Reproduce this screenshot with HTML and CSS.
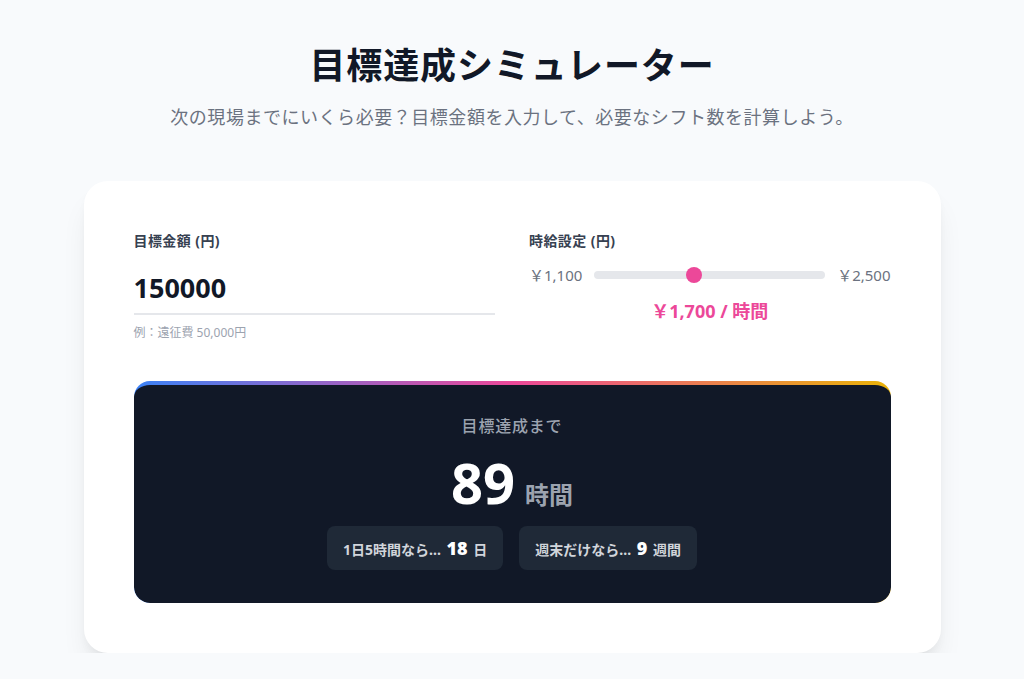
FILE: index.html
```html
<!DOCTYPE html>
<html lang="ja">
<head>
<meta charset="utf-8">
<link rel="stylesheet" href="styles.css">
</head>
<body>
<main class="page">
  <header class="head">
    <h1 class="title">目標達成シミュレーター</h1>
    <p class="subtitle">次の現場までにいくら必要？目標金額を入力して、必要なシフト数を計算しよう。</p>
  </header>
  <section class="card">
    <div class="inputs">
      <div class="field">
        <label class="label">目標金額 (円)</label>
        <input class="amount" type="text" value="150000">
        <p class="hint">例：遠征費 50,000円</p>
      </div>
      <div class="field">
        <label class="label">時給設定 (円)</label>
        <div class="slider-row">
          <span class="edge">￥1,100</span>
          <input class="range" type="range" min="1100" max="2500" step="100" value="1700">
          <span class="edge">￥2,500</span>
        </div>
        <p class="rate">￥1,700 / 時間</p>
      </div>
    </div>
    <div class="result">
      <p class="result-label">目標達成まで</p>
      <p class="result-value"><span class="big">89</span><span class="unit">時間</span></p>
      <div class="pills">
        <div class="pill">1日5時間なら... <strong>18</strong> 日</div>
        <div class="pill">週末だけなら... <strong>9</strong> 週間</div>
      </div>
    </div>
  </section>
</main>
</body>
</html>
```
FILE: styles.css
```css
* { box-sizing: border-box; }
html, body { margin: 0; padding: 0; }
body {
  background: #f8fafc;
  font-family: "Noto Sans", "Noto Sans CJK JP", sans-serif;
  color: #111827;
}
.page {
  width: 857px;
  margin: 0 auto;
  padding-top: 42px;
}
.head { text-align: center; }
.title {
  margin: 0;
  font-family: "Noto Sans CJK JP", sans-serif;
  font-size: 36px;
  line-height: 42px;
  font-weight: 700;
  letter-spacing: 0.025em;
  color: #111827;
}
.subtitle {
  margin: 18px 0 0;
  font-family: "Noto Sans CJK JP", sans-serif;
  font-size: 18px;
  line-height: 28px;
  letter-spacing: 0.03em;
  color: #6b7280;
}
.card {
  margin-top: 51px;
  background: #fff;
  border-radius: 24px;
  padding: 51px 50px 50px;
  box-shadow: 0 20px 30px -8px rgba(0,0,0,0.1), 0 6px 12px -4px rgba(0,0,0,0.06);
}
.inputs {
  display: grid;
  grid-template-columns: 1fr 1fr;
  gap: 34px;
}
.field { display: flex; flex-direction: column; }
.label {
  font-size: 14px;
  font-weight: 700;
  color: #374151;
  line-height: 18px;
  letter-spacing: 0.03em;
}
.amount {
  margin-top: 19px;
  border: 0;
  border-bottom: 2px solid #e5e7eb;
  outline: none;
  background: transparent;
  font-family: inherit;
  font-size: 27px;
  font-weight: 700;
  color: #111827;
  padding: 0 0 6px;
  line-height: 38px;
  width: 100%;
}
.hint {
  margin: 10px 0 0;
  font-size: 12px;
  color: #9ca3af;
  line-height: 16px;
}
.slider-row {
  margin-top: 14px;
  display: flex;
  align-items: center;
  gap: 12px;
}
.edge {
  font-size: 15px;
  color: #6b7280;
  line-height: 22px;
}
.range {
  flex: 1;
  -webkit-appearance: none;
  appearance: none;
  height: 8px;
  border-radius: 4px;
  background: #e5e7eb;
  margin: 0;
  outline: none;
}
.range::-webkit-slider-thumb {
  -webkit-appearance: none;
  width: 16px;
  height: 16px;
  border-radius: 50%;
  background: #ec4899;
  border: 0;
}
.rate {
  margin: 12px 0 0;
  text-align: center;
  font-size: 18px;
  font-weight: 700;
  color: #ec4899;
  line-height: 26px;
}
.result {
  margin-top: 40px;
  background: #111827;
  border-radius: 16px;
  border-top: 4px solid transparent;
  background-image: linear-gradient(#111827, #111827), linear-gradient(90deg, #3b82f6, #ec4899 50%, #eab308);
  background-origin: border-box;
  background-clip: padding-box, border-box;
  padding: 30px 24px 33px;
  text-align: center;
}
.result-label {
  margin: 0;
  font-size: 16px;
  font-weight: 500;
  color: #9ca3af;
  line-height: 22px;
  letter-spacing: 0.05em;
}
.result-value {
  margin: 13px 0 0;
  display: flex;
  justify-content: center;
  align-items: baseline;
  gap: 10px;
  line-height: 64px;
  height: 64px;
}
.big {
  font-size: 56px;
  font-weight: 700;
  color: #fff;
}
.unit {
  font-size: 24px;
  font-weight: 700;
  color: #9ca3af;
}
.pills {
  margin-top: 12px;
  display: flex;
  justify-content: center;
  gap: 16px;
}
.pill {
  background: #1f2937;
  border-radius: 8px;
  padding: 12px 16px;
  font-size: 14px;
  font-weight: 700;
  color: #d1d5db;
  line-height: 20px;
  height: 44px;
}
.pill strong {
  font-size: 18px;
  color: #fff;
  margin: 0 2px;
}
```
